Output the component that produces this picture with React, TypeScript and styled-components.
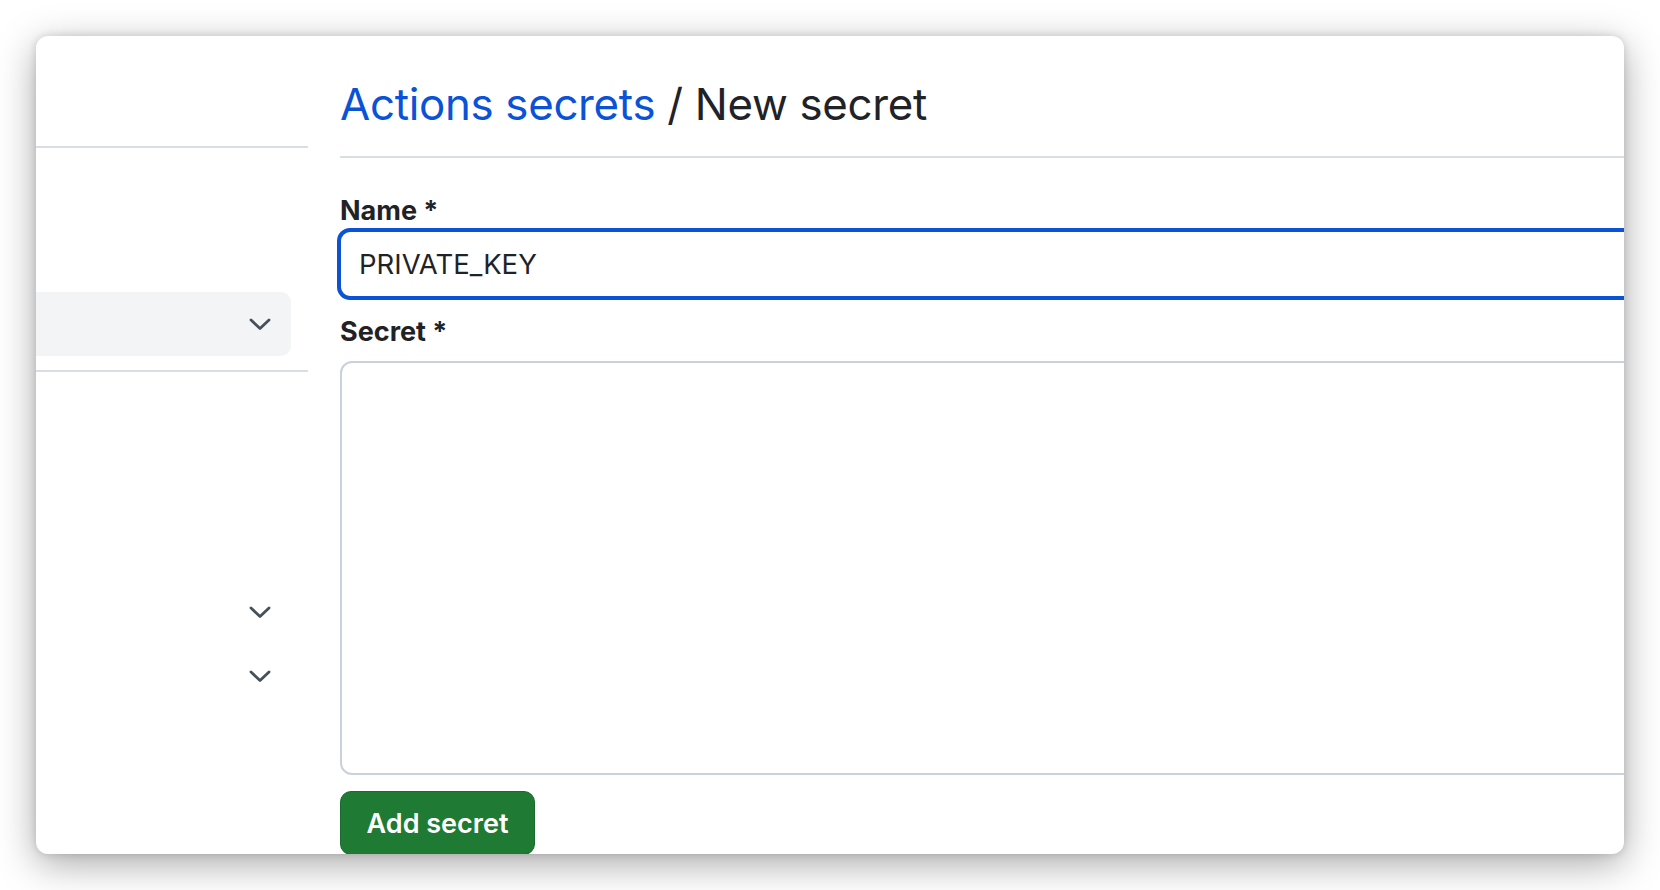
import React from 'react'
import styled, { createGlobalStyle } from 'styled-components'

const GlobalStyle = createGlobalStyle`
  html, body {
    margin: 0;
    padding: 0;
    background: #ffffff;
    font-family: Inter, "Noto Sans", "Liberation Sans", sans-serif;
    color: #1f2328;
  }
`

const Backdrop = styled.div`
  width: 1660px;
  height: 890px;
  padding: 36px;
  box-sizing: border-box;
  overflow: hidden;
`

const Window = styled.div`
  width: 1588px;
  height: 818px;
  background: #ffffff;
  border-radius: 12px;
  overflow: hidden;
  box-shadow: 0 10px 38px rgba(0, 0, 0, 0.34), 0 0 8px rgba(0, 0, 0, 0.14);
  display: grid;
  grid-template-columns: 272px 1400px;
  column-gap: 32px;
`

const Sidebar = styled.aside`
  display: flex;
  flex-direction: column;
`

const SideHeader = styled.div`
  height: 110px;
  border-bottom: 2px solid #d8dee4;
`

const SideGroup = styled.div`
  margin-top: 144px;
  padding-bottom: 14px;
  border-bottom: 2px solid #d8dee4;
`

const NavItem = styled.div<{ active?: boolean }>`
  height: 64px;
  width: 255px;
  display: flex;
  align-items: center;
  justify-content: flex-end;
  padding-right: 20px;
  box-sizing: border-box;
  border-radius: 0 10px 10px 0;
  background: ${({ active }) => (active ? '#f3f4f6' : 'transparent')};
  color: #474f59;
`

const NavList = styled.div`
  margin-top: 208px;
  display: flex;
  flex-direction: column;
`

const Chevron = () => (
  <svg width="22" height="14" viewBox="0 0 22 14" fill="none">
    <path d="M2 3 L11 11.5 L20 3" stroke="currentColor" strokeWidth="2.8" strokeLinecap="round" strokeLinejoin="round" />
  </svg>
)

const Main = styled.main`
  display: flex;
  flex-direction: column;
`

const TitleBar = styled.div`
  height: 122px;
  box-sizing: border-box;
  padding-top: 41px;
  border-bottom: 2px solid #d8dee4;
`

const Title = styled.h1`
  margin: 0;
  font-size: 43.8px;
  font-weight: 400;
  line-height: 56px;
  letter-spacing: -0.3px;
  color: #1f2328;
`

const Crumb = styled.span`
  color: #0b53d6;
`

const Label = styled.label`
  display: block;
  font-size: 27px;
  font-weight: 700;
  line-height: 30px;
  color: #1f2328;
`

const Form = styled.div`
  padding-top: 38px;
  display: flex;
  flex-direction: column;
`

const NameInput = styled.div`
  height: 72px;
  margin-top: 2px;
  margin-left: -3px;
  box-sizing: border-box;
  border: 4px solid #0b52d4;
  border-radius: 13px;
  padding-left: 18px;
  display: flex;
  align-items: center;
  font-size: 27.5px;
  color: #1f2328;
`

const SecretLabel = styled(Label)`
  margin-top: 17px;
`

const SecretArea = styled.div`
  height: 414px;
  margin-top: 14px;
  box-sizing: border-box;
  border: 2px solid #c9d1da;
  border-radius: 12px;
`

const SubmitButton = styled.button`
  margin-top: 16px;
  width: 195px;
  height: 64px;
  border: 1px solid #1b6a2f;
  border-radius: 11px;
  background: #1f7a33;
  color: #ffffff;
  font-family: inherit;
  font-size: 27px;
  font-weight: 600;
  cursor: pointer;
`

export default function App() {
  return (
    <>
      <GlobalStyle />
      <Backdrop>
        <Window>
          <Sidebar>
            <SideHeader />
            <SideGroup>
              <NavItem active>
                <Chevron />
              </NavItem>
            </SideGroup>
            <NavList>
              <NavItem>
                <Chevron />
              </NavItem>
              <NavItem>
                <Chevron />
              </NavItem>
            </NavList>
          </Sidebar>
          <Main>
            <TitleBar>
              <Title>
                <Crumb>Actions secrets</Crumb> / New secret
              </Title>
            </TitleBar>
            <Form>
              <Label>Name *</Label>
              <NameInput>PRIVATE_KEY</NameInput>
              <SecretLabel>Secret *</SecretLabel>
              <SecretArea />
              <SubmitButton>Add secret</SubmitButton>
            </Form>
          </Main>
        </Window>
      </Backdrop>
    </>
  )
}
